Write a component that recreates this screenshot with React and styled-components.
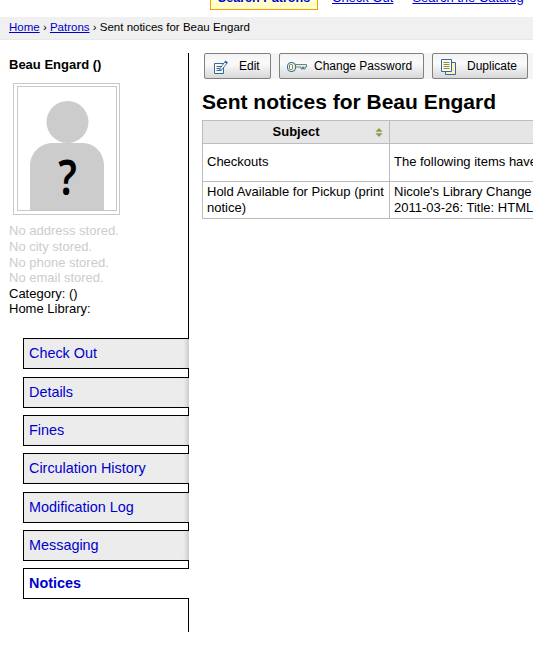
import React from 'react';
import styled, { createGlobalStyle } from 'styled-components';

const GlobalStyle = createGlobalStyle`
  html, body {
    margin: 0;
    padding: 0;
    background: #fff;
    overflow: hidden;
  }
  body {
    font-family: "Liberation Sans", Arial, sans-serif;
    font-size: 13px;
    line-height: 15.6px;
    color: #000;
  }
  a { color: #0000cc; }
`;

const Page = styled.div`
  width: 533px;
  height: 653px;
  overflow: hidden;
`;

const TopBar = styled.div`
  height: 17px;
  display: flex;
  align-items: flex-start;
  overflow: hidden;
  padding-left: 210px;
`;

const SearchTab = styled.div`
  width: 108px;
  height: 10px;
  flex: none;
  box-sizing: border-box;
  background: #ffffcc;
  border: 1px solid #ff9900;
  border-top: 0;
  font-weight: bold;
  font-size: 12.6px;
  color: #0000cc;
  text-align: center;
  line-height: 16px;
  overflow: hidden;
  span {
    display: block;
    margin-top: -10px;
  }
`;

const TopLink = styled.a`
  flex: none;
  margin-left: ${(p) => p.$gap}px;
  margin-top: -10px;
  font-size: 13px;
  line-height: 16px;
  text-decoration: underline;
`;

const Breadcrumbs = styled.div`
  height: 22px;
  background: #f0f0f0;
  border-bottom: 1px solid #e8e8e8;
  padding-left: 9px;
  font-size: 11.5px;
  line-height: 20px;
  a { color: #0000cc; }
`;

const Main = styled.div`
  display: flex;
  padding-top: 13px;
`;

const Sidebar = styled.div`
  width: 188px;
  height: 579px;
  flex: none;
  border-right: 1px solid #000;
`;

const PatronName = styled.h5`
  margin: 4px 0 0 9px;
  font-size: 13px;
  line-height: 15px;
  font-weight: bold;
`;

const PhotoFrame = styled.div`
  margin: 11px 0 0 13px;
  width: 107px;
  height: 132px;
  box-sizing: border-box;
  border: 1px solid #c8c8c8;
  padding: 2px 2px 3px 3px;
`;

const PhotoInner = styled.div`
  height: 100%;
  box-sizing: border-box;
  border: 1px solid #c8c8c8;
  svg { display: block; }
`;

const PatronInfo = styled.ul`
  list-style: none;
  margin: 8.4px 0 0 9px;
  padding: 0;
`;

const InfoLine = styled.li`
  color: ${(p) => (p.$empty ? '#cccccc' : '#000')};
`;

const TabList = styled.ul`
  list-style: none;
  margin: 21.3px -1px 0 23px;
  padding: 0;
`;

const TabItem = styled.li`
  box-sizing: border-box;
  height: 31px;
  margin-bottom: 7.33px;
  border: 1px solid #000;
  border-right: 0;
  background: ${(p) => (p.$active ? '#fff' : '#ececec')};
  box-shadow: ${(p) => (p.$active ? 'none' : 'inset -5px 0 4px -3px #c4c4c4')};
  padding-left: 5px;
  font-size: 14.4px;
  line-height: 29px;
  font-weight: ${(p) => (p.$active ? 'bold' : 'normal')};
  color: #0000cc;
  position: relative;
`;

const Content = styled.div`
  flex: 1;
  min-width: 0;
  padding-left: 13px;
`;

const Toolbar = styled.div`
  display: flex;
  gap: 8px;
  height: 26px;
  width: 338px;
  margin-left: 2px;
  background: #f4f4f4;
`;

const ToolButton = styled.div`
  box-sizing: border-box;
  width: ${(p) => p.$width}px;
  height: 26px;
  flex: none;
  display: flex;
  align-items: center;
  padding: 1px 0 0 ${(p) => p.$pad}px;
  border: 1px solid #808080;
  border-radius: 2px;
  background: linear-gradient(#f4f4f4, #fafafa 40%, #d8d8d8);
  font-size: 12px;
  svg { flex: none; margin-right: ${(p) => p.$space}px; }
`;

const Title = styled.h1`
  margin: 10px 0 5px;
  font-size: 21px;
  line-height: 26px;
  font-weight: bold;
  white-space: nowrap;
`;

const NoticeTable = styled.table`
  border-collapse: collapse;
  table-layout: fixed;
  width: 600px;
`;

const HeadCell = styled.th`
  height: 22px;
  padding: 0;
  width: ${(p) => p.$width}px;
  background: #e6e6e6;
  border: 1px solid #bcbcbc;
  font-size: 13px;
  font-weight: bold;
  position: relative;
`;

const SortIcon = styled.svg`
  position: absolute;
  right: 6px;
  top: 7px;
`;

const Cell = styled.td`
  border: 1px solid #bcbcbc;
  padding: ${(p) => (p.$tall ? '10px 4px 11px' : '2px 4px')};
  line-height: ${(p) => (p.$tall ? '15.6px' : '16px')};
  vertical-align: middle;
  white-space: ${(p) => (p.$nowrap ? 'nowrap' : 'normal')};
  overflow: hidden;
`;

const PersonPhoto = () => (
  <svg width="99" height="124" viewBox="0 0 99 124">
    <circle cx="49.500" cy="35" r="21" fill="#cccccc" />
    <path d="M12 123V79c0-13 10-23 23-23h29c13 0 22 10 22 23v44z" fill="#cccccc" />
    <text
      transform="translate(49.500 108) scale(.82 1)"
      textAnchor="middle"
      fontFamily="'Noto Sans', sans-serif"
      fontSize="49"
      fontWeight="600"
      fill="#000"
    >
      ?
    </text>
  </svg>
);

const EditIcon = () => (
  <svg width="14" height="14" viewBox="0 0 14 14">
    <path d="M.5 3.500h9v10h-9z" fill="#fffbe0" stroke="#2f66b0" />
    <path d="M2.500 6.500h5M2.500 8.500h5M2.500 10.500h5" stroke="#2f66b0" />
    <path d="M6 8.500 11.500 1l2 1.500-5.500 7-2.500 1z" fill="#fff" stroke="#2f66b0" strokeWidth=".9" />
    <path d="M11.500 1l2 1.500-1 1.200-2-1.500z" fill="#3a5a8c" />
  </svg>
);

const KeyIcon = () => (
  <svg width="20" height="10" viewBox="0 0 20 10">
    <rect x=".5" y=".5" width="8" height="9" rx="3.500" fill="#fff3a8" stroke="#2f66b0" />
    <rect x="2.500" y="2.500" width="3" height="5" rx="1" fill="#fffbe0" stroke="#2f66b0" strokeWidth=".8" />
    <path d="M8.500 2.500h11v2.500h-1.500v2h-1.500V5h-1v2H14V5H8.500z" fill="#fff3a8" stroke="#2f66b0" strokeWidth=".8" />
  </svg>
);

const DuplicateIcon = () => (
  <svg width="15" height="16" viewBox="0 0 15 16">
    <path d="M4.500 3.500h10v12h-10z" fill="#fff3b0" stroke="#2f66b0" />
    <path d="M.5.500h10v12h-10z" fill="#fffbd8" stroke="#2f66b0" />
    <path d="M2.500 3.500h6M2.500 5.500h6M2.500 7.500h6M2.500 9.500h6" stroke="#8a8a5a" />
  </svg>
);

const tabs = ['Check Out', 'Details', 'Fines', 'Circulation History', 'Modification Log', 'Messaging', 'Notices'];

export default function App() {
  return (
    <Page>
      <GlobalStyle />
      <TopBar>
        <SearchTab><span>Search Patrons</span></SearchTab>
        <TopLink $gap={14} href="#">Check Out</TopLink>
        <TopLink $gap={19} href="#">Search the Catalog</TopLink>
      </TopBar>
      <Breadcrumbs>
        <a href="#">Home</a> › <a href="#">Patrons</a> › Sent notices for Beau Engard
      </Breadcrumbs>
      <Main>
        <Sidebar>
          <PatronName>Beau Engard ()</PatronName>
          <PhotoFrame>
            <PhotoInner>
              <PersonPhoto />
            </PhotoInner>
          </PhotoFrame>
          <PatronInfo>
            <InfoLine $empty>No address stored.</InfoLine>
            <InfoLine $empty>No city stored.</InfoLine>
            <InfoLine $empty>No phone stored.</InfoLine>
            <InfoLine $empty>No email stored.</InfoLine>
            <InfoLine>Category: ()</InfoLine>
            <InfoLine>Home Library:</InfoLine>
          </PatronInfo>
          <TabList>
            {tabs.map((t) => (
              <TabItem key={t} $active={t === 'Notices'}>{t}</TabItem>
            ))}
          </TabList>
        </Sidebar>
        <Content>
          <Toolbar>
            <ToolButton $width={67} $pad={9} $space={11}><EditIcon />Edit</ToolButton>
            <ToolButton $width={145} $pad={7} $space={7}><KeyIcon />Change Password</ToolButton>
            <ToolButton $width={96} $pad={8} $space={11}><DuplicateIcon />Duplicate</ToolButton>
          </Toolbar>
          <Title>Sent notices for Beau Engard</Title>
          <NoticeTable>
            <thead>
              <tr>
                <HeadCell $width={186}>
                  Subject
                  <SortIcon width="8" height="9" viewBox="0 0 8 9">
                    <path d="M4 0l3.500 3.700H.5z" fill="#8a9a4a" />
                    <path d="M4 9 .5 5.300h7z" fill="#8a9a4a" />
                  </SortIcon>
                </HeadCell>
                <HeadCell $width={414} />
              </tr>
            </thead>
            <tbody>
              <tr>
                <Cell $tall>Checkouts</Cell>
                <Cell $tall $nowrap>The following items have been checked out</Cell>
              </tr>
              <tr>
                <Cell>Hold Available for Pickup (print notice)</Cell>
                <Cell $nowrap>Nicole's Library Change of address<br />2011-03-26: Title: HTML and CSS</Cell>
              </tr>
            </tbody>
          </NoticeTable>
        </Content>
      </Main>
    </Page>
  );
}
